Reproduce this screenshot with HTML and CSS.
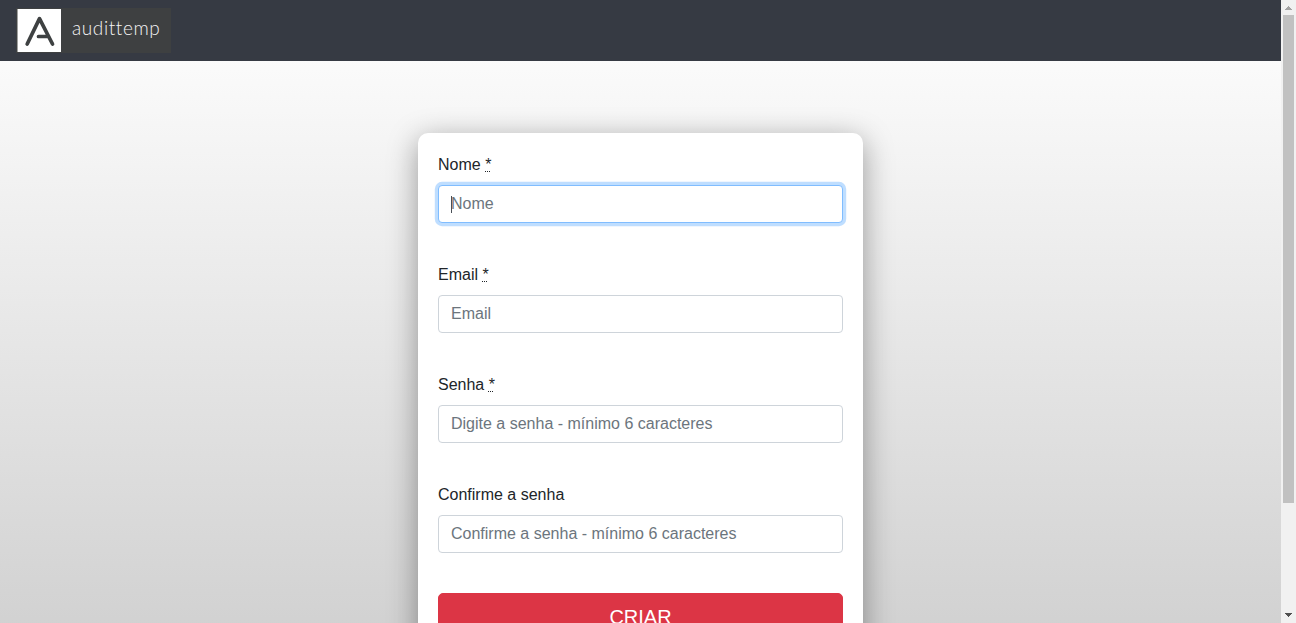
FILE: index.html
```html
<!DOCTYPE html>
<html lang="pt-BR">
<head>
<meta charset="utf-8">
<title>audittemp</title>
<link rel="stylesheet" href="styles.css">
</head>
<body>
<div class="viewport">
  <div class="page">
    <header class="navbar">
      <a class="brand">
        <svg class="brand-mark" width="44" height="43" viewBox="0 0 44 43">
          <rect x="0.5" width="43.5" height="43" fill="#fff"/>
          <path d="M10.2 35 L22.5 9.6 L35.5 35 M21.5 27.5 H31.5" fill="none" stroke="#3e4142" stroke-width="3.7" stroke-linecap="round" stroke-linejoin="round"/>
        </svg>
        <span class="brand-name">audittemp</span>
      </a>
    </header>
    <main class="content">
      <form class="card">
        <div class="field">
          <label for="name">Nome <abbr title="obrigatório">*</abbr></label>
          <div class="control focused"><input id="name" type="text" placeholder="Nome"><span class="caret"></span></div>
        </div>
        <div class="field">
          <label for="email">Email <abbr title="obrigatório">*</abbr></label>
          <div class="control"><input id="email" type="email" placeholder="Email"></div>
        </div>
        <div class="field">
          <label for="password">Senha <abbr title="obrigatório">*</abbr></label>
          <div class="control"><input id="password" type="password" placeholder="Digite a senha - mínimo 6 caracteres"></div>
        </div>
        <div class="field">
          <label for="confirm">Confirme a senha</label>
          <div class="control"><input id="confirm" type="password" placeholder="Confirme a senha - mínimo 6 caracteres"></div>
        </div>
        <button class="submit" type="button">CRIAR</button>
      </form>
    </main>
  </div>
  <div class="scrollbar">
    <svg width="15" height="15" viewBox="0 0 15 15" shape-rendering="crispEdges"><path d="M7 6h1v1h1v1h1v1h1v1H4V9h1V8h1V7h1z" fill="#a3a3a3"/></svg>
    <div class="thumb"></div>
    <svg class="down" width="15" height="15" viewBox="0 0 15 15" shape-rendering="crispEdges"><path d="M4 5h7v1h-1v1h-1v1h-1v1H7V8H6V7H5V6H4z" fill="#505050"/></svg>
  </div>
</div>
</body>
</html>
```
FILE: styles.css
```css
* { box-sizing: border-box; }

body {
  margin: 0;
  overflow: hidden;
  font: 16px/24px "Liberation Sans", Arial, sans-serif;
  color: #212529;
}

.viewport { display: flex; height: 623px; overflow: hidden; }

.page {
  flex: 1;
  height: 757px;
  overflow: hidden;
  background: linear-gradient(#fff, #c8c8c8);
}

.navbar {
  display: flex;
  height: 61px;
  padding: 8px 16px;
  background: #363a43;
}

.brand {
  display: flex;
  width: 155px;
  height: 45px;
  padding: 1px;
  background: #3e4041;
}

.brand-mark { flex: none; }

.brand-name {
  margin: 7px 0 0 11px;
  font: 300 19px/24px Lato, sans-serif;
  letter-spacing: 0.6px;
  color: #f4f4f4;
}

.content { display: flex; justify-content: center; padding-top: 72px; }

.card {
  width: 445px;
  height: 568px;
  padding: 20px;
  border-radius: 10px;
  background: #fff;
  box-shadow: 0 7px 30px rgba(0, 0, 0, 0.38);
}

.field { margin-bottom: 40px; }

label { display: block; margin-bottom: 8px; }

abbr { text-decoration: underline dotted 1px; }

.control { position: relative; height: 38px; }

input {
  display: block;
  width: 100%;
  height: 38px;
  padding: 6px 12px;
  border: 1px solid #ced4da;
  border-radius: 4px;
  background: #fff;
  font: inherit;
  color: #495057;
  outline: none;
}

input::placeholder { color: #6c757d; opacity: 1; }

.focused input {
  border-color: #80bdff;
  box-shadow: 0 0 0 3.2px rgba(0, 123, 255, 0.25);
}

.caret {
  position: absolute;
  left: 13px;
  top: 11px;
  width: 1px;
  height: 17px;
  background: #495057;
}

.submit {
  display: block;
  width: 100%;
  height: 48px;
  padding: 8px 16px;
  border: 1px solid #dc3545;
  border-radius: 5px;
  background: #dc3545;
  font: 20px/30px "Liberation Sans", Arial, sans-serif;
  color: #fff;
}

.scrollbar {
  display: flex;
  flex-direction: column;
  width: 15px;
  background: #f1f1f1;
}

.thumb { width: 11px; height: 488px; margin-left: 2px; background: #c1c1c1; }

.down { margin-top: auto; }
```
